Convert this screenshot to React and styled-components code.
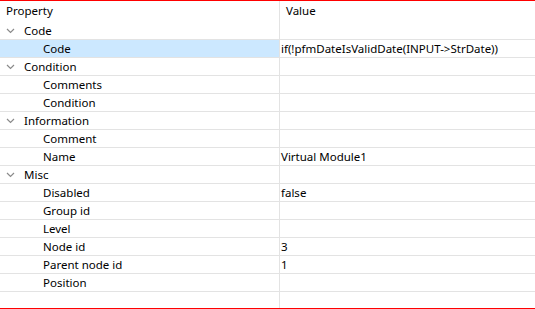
import styled, { createGlobalStyle } from "styled-components"

const GlobalStyle = createGlobalStyle`
body{
  margin:0;
  background:#fff;
}
`

const Sheet = styled.div`
width:535px;
height:309px;
box-sizing:border-box;
border-top:1px solid #ff0000;
border-bottom:1px solid #ff0000;
display:flex;
flex-direction:column;
font-family:"Noto Sans","Open Sans",sans-serif;
font-size:11.5px;
color:#000;
overflow:hidden;
`
const Row = styled.div`
display:grid;
grid-template-columns:280px 1fr;
height:${(p) => (p.$header ? "21px" : "18px")};
box-sizing:border-box;
border-bottom:${(p) => (p.$header ? "none" : "1px solid #e3e3e3")};
flex-shrink:0;
`
const Filler = styled.div`
display:grid;
grid-template-columns:280px 1fr;
flex:1;
`
const NameCell = styled.div`
display:flex;
align-items:center;
box-sizing:border-box;
border-right:1px solid #e3e3e3;
padding-left:${(p) => p.$indent}px;
padding-bottom:${(p) => (p.$top ? "2px" : "0")};
background:${(p) => (p.$selected ? "#cce8ff" : "transparent")};
white-space:nowrap;
line-height:17px;
`
const ValueCell = styled.div`
display:flex;
align-items:center;
padding-left:${(p) => p.$indent || 1}px;
padding-bottom:${(p) => (p.$top ? "2px" : "0")};
white-space:nowrap;
overflow:hidden;
line-height:17px;
`
const Chevron = styled.svg`
width:9px;
height:6px;
margin-right:9px;
flex-shrink:0;
`

const rows = [
  { group: "Code" },
  { name: "Code", value: "if(!pfmDateIsValidDate(INPUT->StrDate))", selected: true },
  { group: "Condition" },
  { name: "Comments" },
  { name: "Condition" },
  { group: "Information" },
  { name: "Comment" },
  { name: "Name", value: "Virtual Module1" },
  { group: "Misc" },
  { name: "Disabled", value: "false" },
  { name: "Group id" },
  { name: "Level" },
  { name: "Node id", value: "3" },
  { name: "Parent node id", value: "1" },
  { name: "Position" },
]

export default function App() {
  return (
    <>
      <GlobalStyle />
      <Sheet>
        <Row $header>
          <NameCell $indent={6} $top>Property</NameCell>
          <ValueCell $indent={6} $top>Value</ValueCell>
        </Row>
        {rows.map((r, i) =>
          r.group ? (
            <Row key={i}>
              <NameCell $indent={6}>
                <Chevron viewBox="0 0 9 6">
                  <polyline points="1,1 4.5,4.5 8,1" fill="none" stroke="#8a8a8a" strokeWidth="1.2" />
                </Chevron>
                {r.group}
              </NameCell>
              <ValueCell />
            </Row>
          ) : (
            <Row key={i}>
              <NameCell $indent={43} $selected={r.selected}>{r.name}</NameCell>
              <ValueCell>{r.value}</ValueCell>
            </Row>
          )
        )}
        <Filler>
          <NameCell />
          <ValueCell />
        </Filler>
      </Sheet>
    </>
  )
}
